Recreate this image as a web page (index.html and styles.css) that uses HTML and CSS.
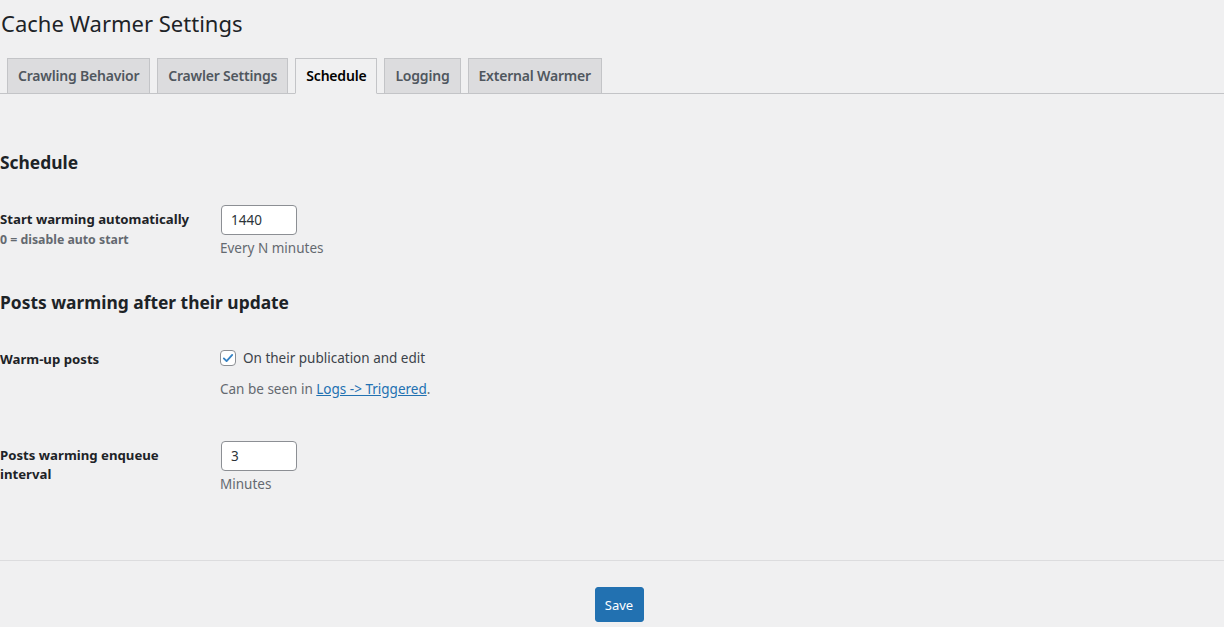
FILE: index.html
```html
<!DOCTYPE html>
<html lang="en">
<head>
<meta charset="utf-8">
<title>Cache Warmer Settings</title>
<link rel="stylesheet" href="styles.css">
</head>
<body>
<div class="wrap">
  <h1 class="page-title">Cache Warmer Settings</h1>
  <nav class="nav-tabs">
    <a class="nav-tab">Crawling Behavior</a>
    <a class="nav-tab">Crawler Settings</a>
    <a class="nav-tab active">Schedule</a>
    <a class="nav-tab">Logging</a>
    <a class="nav-tab">External Warmer</a>
  </nav>

  <div class="content">
    <h2 class="section-title first">Schedule</h2>
    <table class="form-table">
      <tr>
        <th>
          <div class="label">Start warming automatically</div>
          <div class="sub-label">0 = disable auto start</div>
        </th>
        <td>
          <input class="num-input" type="text" value="1440">
          <p class="description">Every N minutes</p>
        </td>
      </tr>
    </table>

    <h2 class="section-title">Posts warming after their update</h2>
    <table class="form-table">
      <tr class="row-check">
        <th><div class="label">Warm-up posts</div></th>
        <td>
          <label class="check-label">
            <span class="checkbox">
              <svg width="14" height="14" viewBox="0 0 20 20"><path d="M4 10.5l4 4 8-9" fill="none" stroke="#3582c4" stroke-width="2.6" stroke-linecap="round" stroke-linejoin="round"/></svg>
            </span>
            On their publication and edit
          </label>
          <p class="description check-desc">Can be seen in <a class="link">Logs -&gt; Triggered</a>.</p>
        </td>
      </tr>
      <tr class="row-last">
        <th><div class="label">Posts warming enqueue interval</div></th>
        <td>
          <input class="num-input" type="text" value="3">
          <p class="description">Minutes</p>
        </td>
      </tr>
    </table>
  </div>

  <div class="footer">
    <button class="btn-primary" type="button">Save</button>
  </div>
</div>
</body>
</html>
```

FILE: styles.css
```css
html, body {
  margin: 0;
  padding: 0;
  background: #f0f0f1;
}
body {
  font-family: "Noto Sans", "Open Sans", sans-serif;
  font-size: 13px;
  color: #1d2327;
}
.wrap {
  width: 1224px;
}
.page-title {
  margin: 0;
  padding: 9px 0 4px 1px;
  font-size: 22px;
  font-weight: 400;
  line-height: 29px;
  color: #1d2327;
}
.nav-tabs {
  display: flex;
  margin-top: 16px;
  border-bottom: 1px solid #c3c4c7;
  height: 35px;
}
.nav-tab {
  display: block;
  margin-left: 7px;
  padding: 5px 10px;
  height: 24px;
  line-height: 24px;
  border: 1px solid #c3c4c7;
  background: #dcdcde;
  color: #50575e;
  font-size: 14px;
  font-weight: 600;
  letter-spacing: -0.2px;
  white-space: nowrap;
}
.nav-tab.active {
  background: #f0f0f1;
  color: #000;
  border-bottom-color: #f0f0f1;
}
.content {
  padding-top: 56px;
}
.section-title {
  margin: 0 0 16px;
  font-size: 17.4px;
  font-weight: 700;
  line-height: 24px;
  color: #1d2327;
}
.section-title:not(.first) {
  margin-top: 17px;
}
.form-table {
  border-collapse: collapse;
  border-spacing: 0;
}
.form-table th {
  width: 200px;
  padding: 20px 20px 20px 0;
  text-align: left;
  vertical-align: top;
}
.form-table td {
  padding: 15px 10px 15px 0;
  vertical-align: top;
}
.label {
  font-size: 13.2px;
  font-weight: 700;
  line-height: 19px;
  color: #1d2327;
}
.sub-label {
  font-size: 12.3px;
  font-weight: 700;
  line-height: 16px;
  margin-top: 3px;
  color: #646970;
}
.num-input {
  box-sizing: border-box;
  display: block;
  width: 76px;
  height: 30px;
  margin: 0 0 0 1px;
  padding: 0 9px;
  border: 1px solid #8c8f94;
  border-radius: 4px;
  background: #fff;
  font-family: inherit;
  font-size: 13.5px;
  color: #2c3338;
  outline: none;
}
.description {
  margin: 3px 0 0;
  font-size: 13.5px;
  line-height: 20px;
  color: #646970;
}
.check-label {
  display: flex;
  align-items: center;
  gap: 7px;
  height: 24px;
  margin-top: 1px;
  font-size: 13.5px;
  color: #3c434a;
}
.checkbox {
  box-sizing: border-box;
  width: 16px;
  height: 16px;
  border: 1px solid #8c8f94;
  border-radius: 4px;
  background: #fff;
  display: flex;
  align-items: center;
  justify-content: center;
}
.check-desc {
  margin-top: 9px;
}
.link {
  color: #2271b1;
  text-decoration: underline;
}
.row-last th,
.row-last td {
  border-top: 12px solid transparent;
}
.footer {
  margin-top: 51px;
  border-top: 1px solid #dcdcde;
  padding-top: 26px;
  padding-left: 14px;
  display: flex;
  justify-content: center;
}
.btn-primary {
  box-sizing: border-box;
  height: 35px;
  width: 49px;
  padding: 0;
  border: 1px solid #2271b1;
  border-radius: 3px;
  background: #2271b1;
  color: #fff;
  font-family: inherit;
  font-size: 13px;
}
```
